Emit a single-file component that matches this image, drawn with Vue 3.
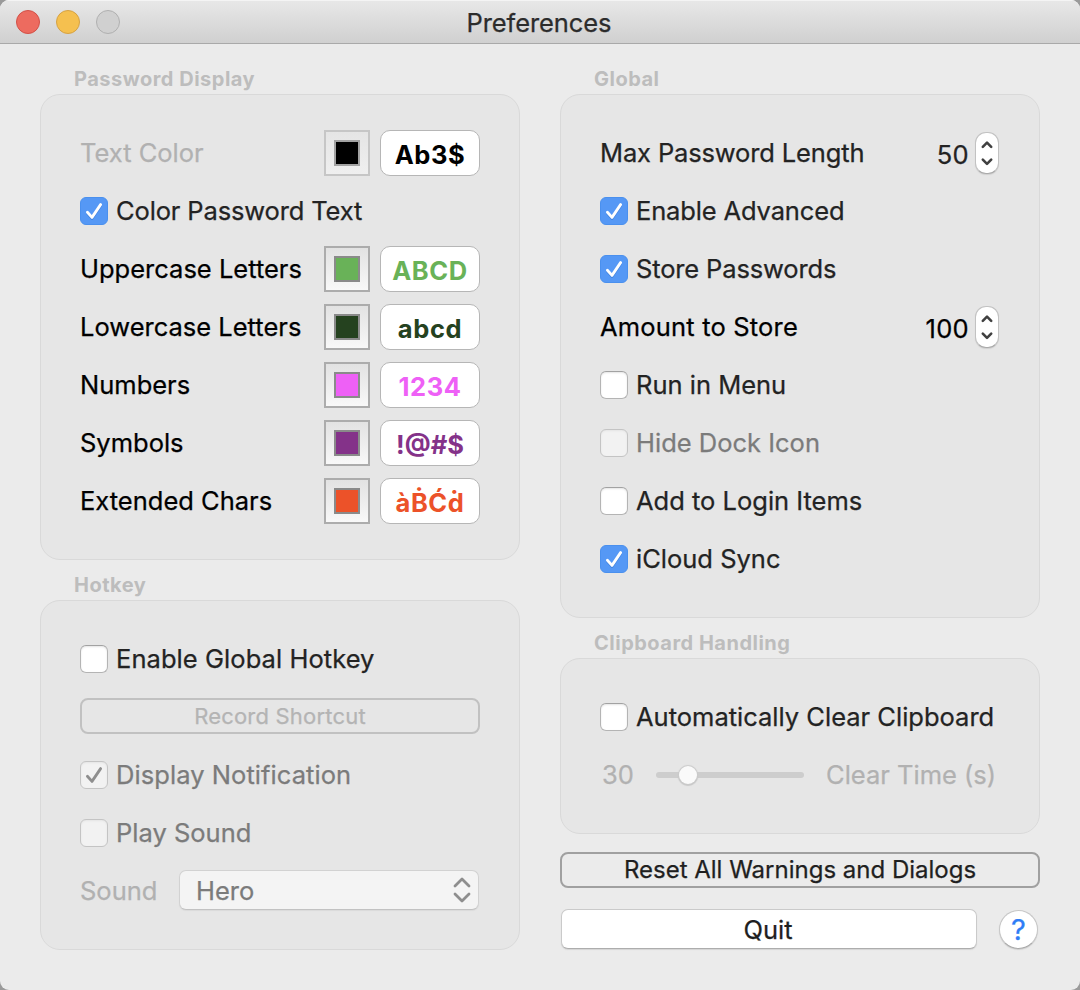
<script setup>
const swatches = [
  { label: 'Uppercase Letters', sample: 'ABCD', tone: 'green' },
  { label: 'Lowercase Letters', sample: 'abcd', tone: 'forest' },
  { label: 'Numbers', sample: '1234', tone: 'pink' },
  { label: 'Symbols', sample: '!@#$', tone: 'purple' },
  { label: 'Extended Chars', sample: 'àḂĆḋ', tone: 'orange' },
]
const menuOptions = [
  { label: 'Run in Menu' },
  { label: 'Hide Dock Icon', off: true },
  { label: 'Add to Login Items' },
  { label: 'iCloud Sync', checked: true },
]
</script>

<template>
  <div class="desktop">
    <div class="window">
      <header class="titlebar">
        <div class="lights">
          <span class="light close"></span>
          <span class="light minimize"></span>
          <span class="light zoom"></span>
        </div>
        <h1>Preferences</h1>
      </header>

      <main class="columns">
        <section class="column">
          <h2>Password Display</h2>
          <div class="box display">
            <div class="row">
              <span class="text dim">Text Color</span>
              <span class="well faded"><i class="black"></i></span>
              <span class="sample ink-black">Ab3$</span>
            </div>
            <div class="row">
              <span class="check on"><svg viewBox="0 0 28 28"><path d="M7.4 15.2 12 20.4 20.6 7.6" /></svg></span>
              <span class="text soft tight">Color Password Text</span>
            </div>
            <div v-for="s in swatches" :key="s.label" class="row">
              <span class="text">{{ s.label }}</span>
              <span class="well"><i :class="s.tone"></i></span>
              <span class="sample" :class="'ink-' + s.tone">{{ s.sample }}</span>
            </div>
          </div>

          <h2 class="next">Hotkey</h2>
          <div class="box hotkey">
            <div class="row">
              <span class="check"></span>
              <span class="text soft loose">Enable Global Hotkey</span>
            </div>
            <div class="row">
              <button class="outline record">Record Shortcut</button>
            </div>
            <div class="row">
              <span class="check off"><svg viewBox="0 0 28 28"><path d="M7.4 15.2 12 20.4 20.6 7.6" /></svg></span>
              <span class="text mid loose">Display Notification</span>
            </div>
            <div class="row">
              <span class="check off"></span>
              <span class="text mid">Play Sound</span>
            </div>
            <div class="row">
              <span class="text dim">Sound</span>
              <div class="popup">
                <span class="mid">Hero</span>
                <svg viewBox="0 0 18 26"><path d="M2 9 9 2 16 9M2 17 9 24 16 17" /></svg>
              </div>
            </div>
          </div>
        </section>

        <section class="column">
          <h2>Global</h2>
          <div class="box global">
            <div class="row">
              <span class="text soft tight">Max Password Length</span>
              <span class="number soft">50</span>
              <span class="stepper"><svg viewBox="0 0 24 42"><path d="M7.8 14.8 12 10.6 16.2 14.8M7.8 27.6 12 31.8 16.2 27.6" /></svg></span>
            </div>
            <div class="row">
              <span class="check on"><svg viewBox="0 0 28 28"><path d="M7.4 15.2 12 20.4 20.6 7.6" /></svg></span>
              <span class="text soft tight">Enable Advanced</span>
            </div>
            <div class="row">
              <span class="check on"><svg viewBox="0 0 28 28"><path d="M7.4 15.2 12 20.4 20.6 7.6" /></svg></span>
              <span class="text soft tight">Store Passwords</span>
            </div>
            <div class="row">
              <span class="text amount">Amount to Store</span>
              <span class="number">100</span>
              <span class="stepper"><svg viewBox="0 0 24 42"><path d="M7.8 14.8 12 10.6 16.2 14.8M7.8 27.6 12 31.8 16.2 27.6" /></svg></span>
            </div>
            <div v-for="o in menuOptions" :key="o.label" class="row">
              <span class="check" :class="{ on: o.checked, off: o.off }">
                <svg v-if="o.checked" viewBox="0 0 28 28"><path d="M7.4 15.2 12 20.4 20.6 7.6" /></svg>
              </span>
              <span class="text" :class="o.off ? 'mid' : 'soft'">{{ o.label }}</span>
            </div>
          </div>

          <h2 class="next">Clipboard Handling</h2>
          <div class="box clipboard">
            <div class="row">
              <span class="check"></span>
              <span class="text soft">Automatically Clear Clipboard</span>
            </div>
            <div class="row">
              <span class="seconds dim">30</span>
              <span class="slider"><b></b></span>
              <span class="dim cleartime">Clear Time (s)</span>
            </div>
          </div>

          <button class="outline reset">Reset All Warnings and Dialogs</button>
          <div class="actions">
            <button class="quit">Quit</button>
            <button class="help">?</button>
          </div>
        </section>
      </main>
    </div>
  </div>
</template>

<style>
body {
  margin: 0;
}
</style>

<style scoped>
.desktop {
  width: 1080px;
  height: 990px;
  background: #9a9a9a;
  overflow: hidden;
  font-family: Inter, 'Noto Sans', sans-serif;
  font-size: 25.5px;
  line-height: 30px;
  color: #000;
  -webkit-text-stroke-width: 0.25px;
}
.window {
  box-sizing: border-box;
  height: 990px;
  background: #ebebeb;
  border-radius: 9px;
  overflow: hidden;
}
.titlebar {
  position: relative;
  box-sizing: border-box;
  height: 44px;
  border-bottom: 1px solid #a9a9a9;
  background: linear-gradient(#e8e8e8, #d0d0d0);
  box-shadow: inset 0 1px 0 #f4f4f4;
  display: flex;
  align-items: center;
  justify-content: center;
}
.lights {
  position: absolute;
  left: 16px;
  top: 10px;
  display: flex;
  gap: 16px;
}
.light {
  box-sizing: border-box;
  width: 24px;
  height: 24px;
  border-radius: 50%;
  border: 1px solid;
}
.close { background: #ed6b5f; border-color: #d35047; }
.minimize { background: #f5c04f; border-color: #d6a243; }
.zoom { background: #d0d0d0; border-color: #b0b0b0; }
h1 {
  margin: 2px 0 0 -2px;
  font-size: 25.5px;
  font-weight: 400;
  letter-spacing: -0.1px;
  color: #2c2c2c;
}
.columns {
  display: grid;
  grid-template-columns: 480px 480px;
  column-gap: 40px;
  padding: 22px 40px 0;
}
.column {
  display: flex;
  flex-direction: column;
}
h2 {
  margin: 0 0 2px 34px;
  height: 26px;
  line-height: 26px;
  font-size: 20px;
  font-weight: 700;
  letter-spacing: 0.5px;
  color: #bdbdbd;
  white-space: nowrap;
  -webkit-text-stroke-width: 0;
}
h2.next {
  margin-top: 12px;
}
.box {
  box-sizing: border-box;
  padding: 29px 39px;
  border: 1px solid #d9d9d9;
  border-radius: 20px;
  background: #e6e6e6;
}
.display { height: 466px; }
.hotkey { height: 350px; }
.global { height: 524px; }
.clipboard { height: 176px; }
.row {
  display: flex;
  align-items: center;
  height: 58px;
  white-space: nowrap;
}
.text { flex: 1; }
.tight { letter-spacing: -0.14px; }
.loose { letter-spacing: 0.06px; }
.amount { letter-spacing: 0.18px; }
.soft { color: #232323; }
.mid { color: #7b7b7b; }
.dim { color: #b1b1b1; }
.check {
  box-sizing: border-box;
  width: 28px;
  height: 28px;
  margin-right: 8px;
  border: 1px solid #b4b4b4;
  border-top-color: #a2a2a2;
  border-radius: 6px;
  background: #fff;
  box-shadow: inset 0 1px 2px #e4e4e4;
}
.check svg {
  display: block;
  width: 28px;
  height: 28px;
  margin: -1px;
  fill: none;
  stroke: #fff;
  stroke-width: 2.8;
  stroke-linecap: round;
  stroke-linejoin: round;
}
.check.on {
  border-color: #4a90ee;
  background: #5598f5;
  box-shadow: none;
}
.check.on svg { filter: drop-shadow(0 1px 0.5px #3c7fdc); }
.check.off {
  border-color: #c4c4c4;
  background: #f2f2f2;
}
.check.off svg { stroke: #8e8e8e; }
.well {
  box-sizing: border-box;
  width: 46px;
  height: 46px;
  padding: 8px;
  border: 2px solid #acacac;
  background: linear-gradient(#e2e2e2, #f8f8f8);
}
.well.faded {
  border-color: #c6c6c6;
  background: linear-gradient(#e5e5e5, #efefef);
}
.well i {
  display: block;
  box-sizing: border-box;
  width: 26px;
  height: 26px;
  border: 2px solid #8a8a8a;
}
.well.faded i { border-color: #a2a2a2; }
.black { background: #000; }
.green { background: #69b258; }
.forest { background: #25421f; }
.pink { background: #ee60f6; }
.purple { background: #843289; }
.orange { background: #ec5229; }
.ink-black { color: #000; }
.ink-green { color: #69b258; }
.ink-forest { color: #25421f; }
.ink-pink { color: #ee60f6; }
.ink-purple { color: #843289; }
.ink-orange { color: #ec5229; }
.sample {
  box-sizing: border-box;
  width: 100px;
  height: 46px;
  margin-left: 10px;
  padding-top: 3px;
  border: 1px solid #b6b6b6;
  border-radius: 10px;
  background: #fff;
  line-height: 42px;
  text-align: center;
  font-weight: 700;
  letter-spacing: 0.6px;
  -webkit-text-stroke-width: 0;
}
.ink-purple.sample { letter-spacing: 0; }
button {
  box-sizing: border-box;
  padding: 0;
  font-family: inherit;
  text-align: center;
}
.outline {
  height: 36px;
  border: 2px solid #a0a0a0;
  border-radius: 8px;
  background: transparent;
  line-height: 32px;
}
.record {
  width: 400px;
  margin-top: -2px;
  border-color: #c1c1c1;
  color: #b4b4b4;
  font-size: 22px;
  letter-spacing: 0.2px;
}
.popup {
  box-sizing: border-box;
  display: flex;
  align-items: center;
  justify-content: space-between;
  width: 300px;
  height: 40px;
  margin: -2px 1px 0 0;
  padding: 2px 7px 0 16px;
  border: 1px solid #d2d2d2;
  border-bottom-color: #c2c2c2;
  border-radius: 7px;
  background: #f4f4f4;
  box-shadow: 0 1px 1px #dadada;
}
.popup svg {
  width: 18px;
  height: 26px;
  margin-top: -2px;
  fill: none;
  stroke: #8e8e8e;
  stroke-width: 2.8;
  stroke-linecap: round;
  stroke-linejoin: round;
}
.number {
  padding-top: 3px;
  margin-right: 6px;
  letter-spacing: 0.3px;
}
.stepper {
  box-sizing: border-box;
  width: 24px;
  height: 42px;
  margin-right: 1px;
  border: 1px solid #c2c2c2;
  border-bottom-color: #aaa;
  border-radius: 11px;
  background: #fff;
  box-shadow: 0 1px 1px #cfcfcf;
}
.stepper svg {
  display: block;
  width: 24px;
  height: 42px;
  margin: -1px;
  fill: none;
  stroke: #404040;
  stroke-width: 2.6;
  stroke-linecap: round;
  stroke-linejoin: round;
}
.seconds {
  width: 56px;
  padding-left: 2px;
  box-sizing: border-box;
}
.slider {
  position: relative;
  width: 148px;
  height: 6px;
  border-radius: 3px;
  background: #cdcdcd;
}
.slider b {
  position: absolute;
  left: 23px;
  top: -6px;
  width: 18px;
  height: 18px;
  border-radius: 50%;
  background: #fafafa;
  box-shadow: 0 0 1px 1px #cbcbcb, 0 1px 1px 1px #c6c6c6;
}
.cleartime { margin-left: 22px; }
.reset {
  width: 480px;
  margin-top: 18px;
  color: #1f1f1f;
  font-size: 24px;
}
.actions {
  display: flex;
  align-items: flex-start;
  justify-content: space-between;
  margin: 21px 2px 0 1px;
}
.quit {
  width: 416px;
  height: 40px;
  border: 1px solid #cacaca;
  border-bottom-color: #adadad;
  border-radius: 7px;
  background: #fff;
  box-shadow: 0 1px 1px #d4d4d4;
  color: #1f1f1f;
  font-size: 25.5px;
  line-height: 37px;
  text-indent: -2px;
}
.help {
  width: 39px;
  height: 39px;
  margin-top: 1px;
  border: 1px solid #c6c6c6;
  border-bottom-color: #a8a8a8;
  border-radius: 50%;
  background: #fff;
  box-shadow: 0 1px 1px #cecece;
  color: #2f7df6;
  font-size: 29px;
  line-height: 38px;
}
</style>
